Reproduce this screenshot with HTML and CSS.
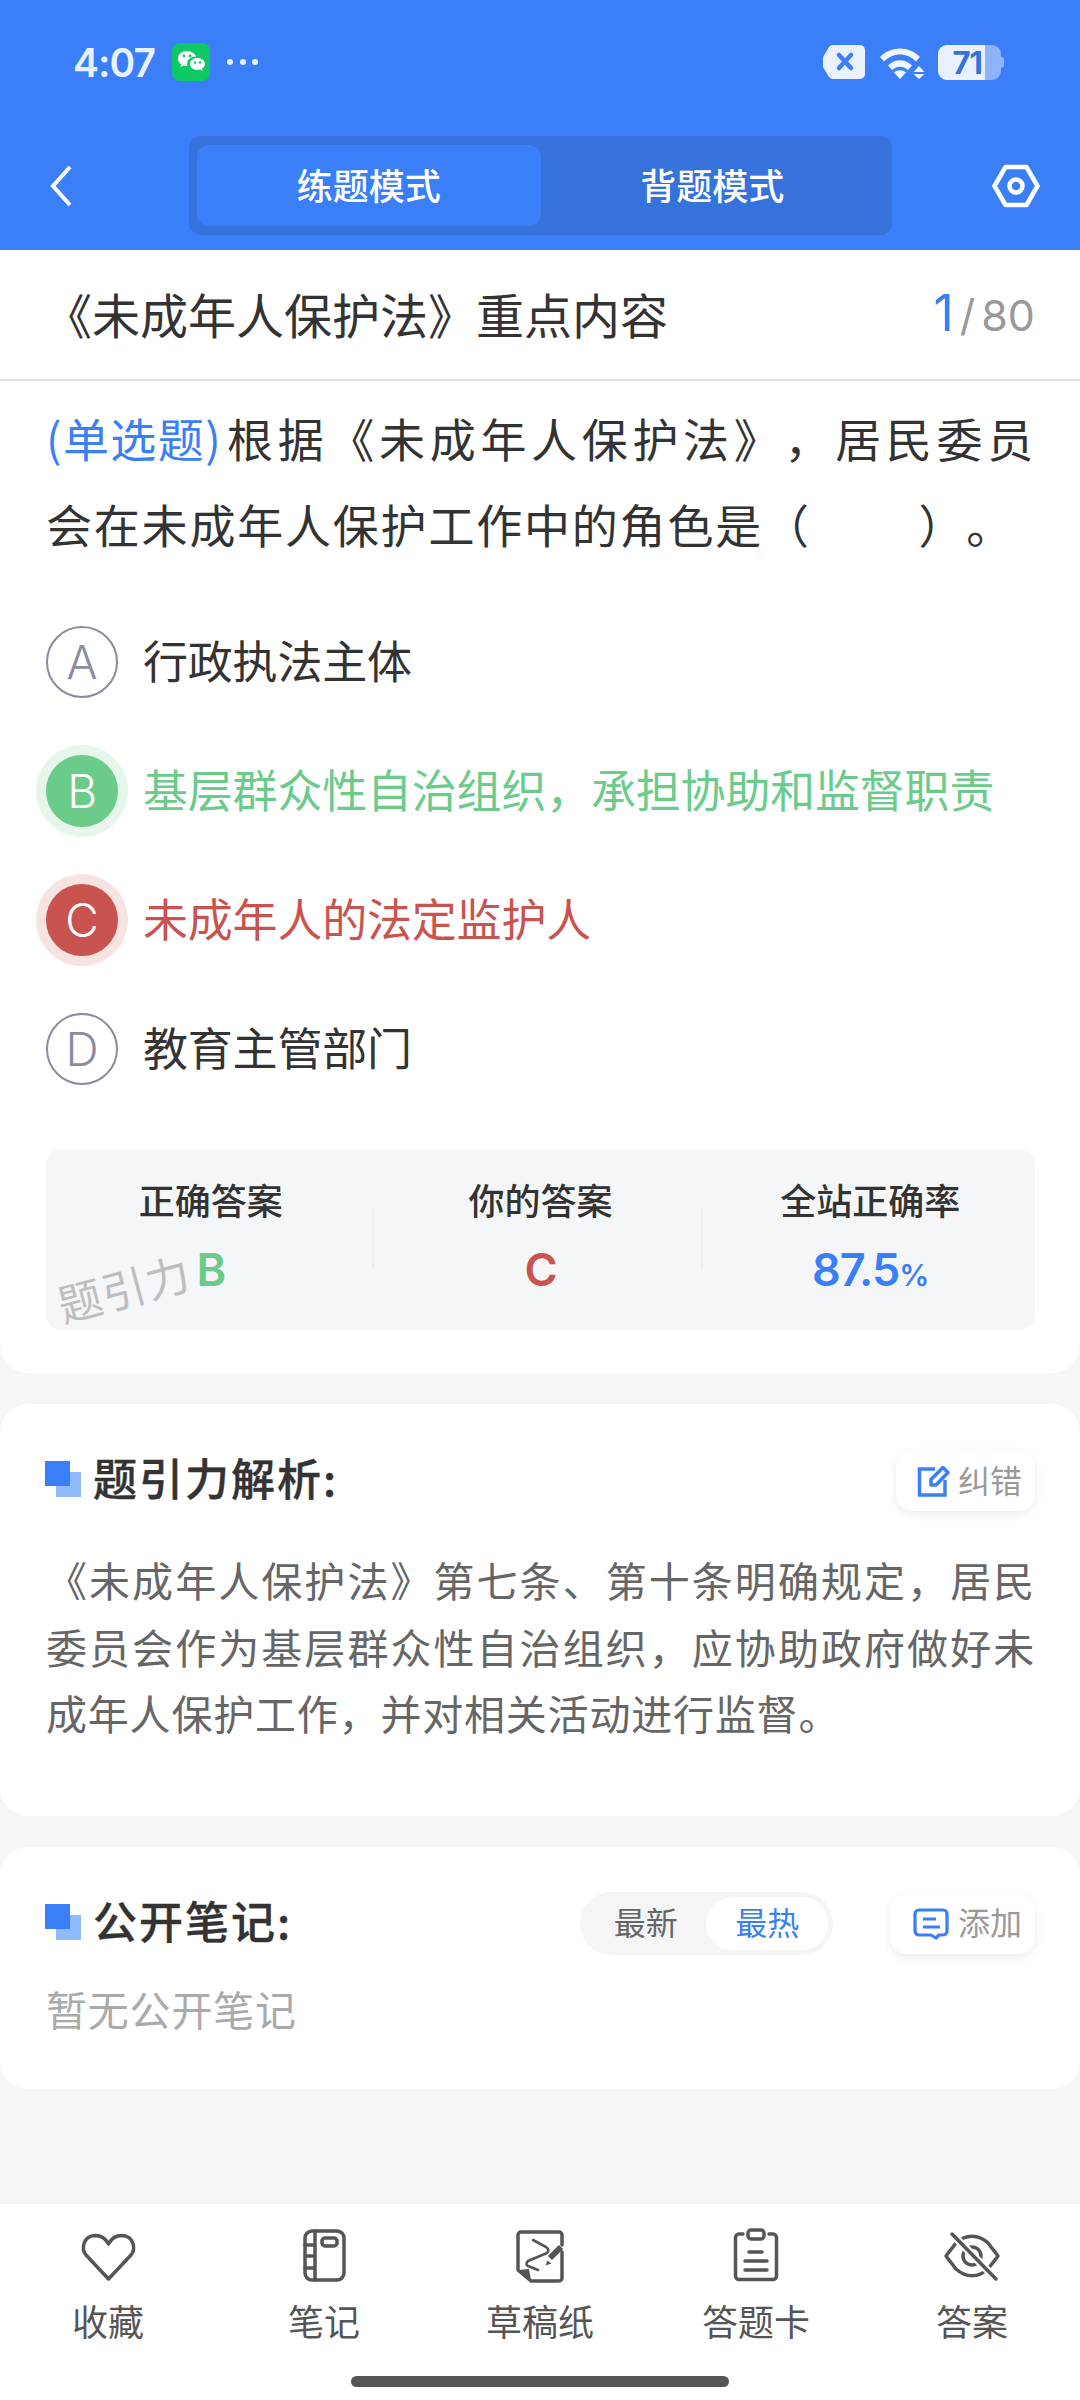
FILE: index.html
```html
<!DOCTYPE html>
<html lang="zh-CN">
<head>
<meta charset="utf-8">
<title>练题模式</title>
<link rel="stylesheet" href="styles.css">
</head>
<body>
<div class="app">
  <header class="header">
    <div class="status">
      <span class="time">4:07</span>
      <svg class="wechat" viewBox="0 0 38 38" width="38" height="38">
        <rect width="38" height="38" rx="8" fill="#0DC963"/>
        <path d="M15 8c-5 0-9 3.300-9 7.500 0 2.400 1.300 4.400 3.200 5.800l-.9 2.900 3.300-1.700c1.100.3 2.200.5 3.400.5h.6c-.3-.8-.4-1.500-.4-2.300 0-4 3.800-7.100 8.400-7.100h.5C23 10.500 19.400 8 15 8z" fill="#fff"/>
        <path d="M33 21c0-3.400-3.400-6-7.500-6S18 17.600 18 21s3.400 6 7.500 6c.9 0 1.800-.1 2.600-.4l2.600 1.400-.7-2.300C31.800 24.600 33 22.900 33 21z" fill="#fff"/>
        <circle cx="12" cy="13" r="1.400" fill="#0DC963"/><circle cx="18" cy="13" r="1.400" fill="#0DC963"/>
        <circle cx="23" cy="19.500" r="1.200" fill="#0DC963"/><circle cx="28" cy="19.500" r="1.200" fill="#0DC963"/>
      </svg>
      <span class="dots"><i></i><i></i><i></i></span>
      <span class="status-right">
        <svg viewBox="0 0 44 36" width="44" height="36">
          <path d="M11 1H38a5 5 0 0 1 5 5V30a5 5 0 0 1-5 5H11a5 5 0 0 1-4-2L1 23V13L7 3a5 5 0 0 1 4-2z" fill="#E9F0FF"/>
          <path d="M17 11l12 13M29 11L17 24" stroke="#3B7FF8" stroke-width="4.500" stroke-linecap="round" fill="none"/>
        </svg>
        <svg class="wifi" viewBox="0 0 48 34" width="48" height="34">
          <path d="M2 12C13 .5 31 .5 42 12l-4 4.500C29 7 15 7 6 16.500z" fill="#F2F6FF"/>
          <path d="M10 20.500c7-7 17-7 24 0l-4 4.500c-5-4.500-11-4.500-16 0z" fill="#F2F6FF"/>
          <path d="M16 27.500c3.500-3 8.500-3 12 0l-6 6.500z" fill="#F2F6FF"/>
          <path d="M41 21l5.500 6h-11zM35.500 29h11L41 34z" fill="#F2F6FF"/>
        </svg>
        <span class="battery"><span class="battery-fill">71</span></span>
      </span>
    </div>
    <nav class="nav">
      <svg class="back" viewBox="0 0 24 44" width="24" height="44"><path d="M21 3L4 22l17 19" fill="none" stroke="#fff" stroke-width="4"/></svg>
      <div class="tabs">
        <span class="tab tab-on">练题模式</span>
        <span class="tab">背题模式</span>
      </div>
      <svg class="gear" viewBox="0 0 48 44" width="48" height="44">
        <path d="M13.500 3h21L45.500 22l-11 19h-21L2.500 22z" fill="none" stroke="#fff" stroke-width="4.500" stroke-linejoin="round"/>
        <circle cx="24" cy="22" r="6.500" fill="none" stroke="#fff" stroke-width="4.500"/>
      </svg>
    </nav>
  </header>

  <main class="main">
    <section class="card card-question">
      <div class="title-row">
        <h1 class="title">《未成年人保护法》重点内容</h1>
        <span class="progress"><b>1</b><i>/</i>80</span>
      </div>
      <div class="question-body">
        <p class="question"><span class="qtype">(单选题)</span>根据《未成年人保护法》，居民委员会在未成年人保护工作中的角色是（　　&nbsp;）。</p>
        <ul class="options">
          <li class="option"><span class="letter">A</span><span class="option-text">行政执法主体</span></li>
          <li class="option option-right"><span class="letter">B</span><span class="option-text">基层群众性自治组织，承担协助和监督职责</span></li>
          <li class="option option-wrong"><span class="letter">C</span><span class="option-text">未成年人的法定监护人</span></li>
          <li class="option"><span class="letter">D</span><span class="option-text">教育主管部门</span></li>
        </ul>
        <div class="stats">
          <div class="stat"><span class="stat-label">正确答案</span><span class="stat-value green">B</span></div>
          <div class="stat"><span class="stat-label">你的答案</span><span class="stat-value red">C</span></div>
          <div class="stat"><span class="stat-label">全站正确率</span><span class="stat-value blue">87.5<small>%</small></span></div>
          <span class="watermark">题引力</span>
        </div>
      </div>
    </section>

    <section class="card card-analysis">
      <div class="section-head">
        <h2 class="section-title">题引力解析:</h2>
        <span class="chip">
          <svg viewBox="0 0 34 32" width="34" height="32">
            <path d="M18 4H2.500V30H28V15" fill="none" stroke="#3B7FF8" stroke-width="3.500"/>
            <path d="M14 14.500L26 2.500l5 5-12 12.500h-5z" fill="none" stroke="#3B7FF8" stroke-width="3.500" stroke-linejoin="round"/>
          </svg><span class="chip-text">纠错</span></span>
      </div>
      <p class="analysis">《未成年人保护法》第七条、第十条明确规定，居民委员会作为基层群众性自治组织，应协助政府做好未成年人保护工作，并对相关活动进行监督。</p>
    </section>

    <section class="card card-notes">
      <div class="section-head">
        <h2 class="section-title">公开笔记:</h2>
        <div class="head-tools">
          <div class="toggle"><span class="toggle-item">最新</span><span class="toggle-item toggle-on">最热</span></div>
          <span class="chip chip-wide">
            <svg viewBox="0 0 36 32" width="36" height="32">
              <path d="M6 2h24a4 4 0 0 1 4 4v17a4 4 0 0 1-4 4h-4l-3 3-5-3H6a4 4 0 0 1-4-4V6a4 4 0 0 1 4-4z" fill="none" stroke="#3B7FF8" stroke-width="3.200" stroke-linejoin="round"/>
              <path d="M10 11h13M10 19h17" stroke="#3B7FF8" stroke-width="3.200"/>
            </svg><span class="chip-text">添加</span></span>
        </div>
      </div>
      <p class="empty">暂无公开笔记</p>
    </section>
  </main>

  <footer class="toolbar">
    <div class="tools">
      <div class="tool">
        <svg viewBox="0 0 60 60" width="60" height="60"><path d="M30.500 54L8 30C3 24 5 11 17 10.500c6 0 11 3.500 13.500 8.500C33 14 38 10.500 44 10.500 56 11 58 24 53 30z" class="ico"/></svg>
        <span>收藏</span>
      </div>
      <div class="tool">
        <svg viewBox="0 0 60 60" width="60" height="60">
          <rect x="11" y="6" width="39" height="49" rx="7" class="ico"/>
          <path d="M21 6v49M11 20h10M11 31h10M11 43h10" class="ico"/>
          <rect x="28" y="13" width="15" height="8" rx="3" class="ico"/>
        </svg>
        <span>笔记</span>
      </div>
      <div class="tool">
        <svg viewBox="0 0 60 60" width="60" height="60">
          <path d="M52 20V10a3 3 0 0 0-3-3H11a3 3 0 0 0-3 3v35l13 11h28a3 3 0 0 0 3-3V27" class="ico"/>
          <path d="M9 45l10-1 2 11z" class="ico-fill"/>
          <path d="M23 15l13 7c3 2 3 4 1 6L18 36c-2 2-2 4 0 5l10 4" class="ico thin"/>
          <path d="M51 22L40 33" class="ico wide"/>
          <path d="M37.500 35.500l-2 5 6-2z" class="ico-fill"/>
        </svg>
        <span>草稿纸</span>
      </div>
      <div class="tool">
        <svg viewBox="0 0 60 60" width="60" height="60">
          <path d="M17 9h-4a3.500 3.500 0 0 0-3.500 3.500V51a3.500 3.500 0 0 0 3.500 3.500h34a3.500 3.500 0 0 0 3.500-3.500V12.500A3.500 3.500 0 0 0 47 9h-4" class="ico"/>
          <rect x="22" y="5" width="16" height="9" rx="3" class="ico"/>
          <path d="M23 27h13M19 36h22M19 45h22" class="ico"/>
        </svg>
        <span>答题卡</span>
      </div>
      <div class="tool">
        <svg viewBox="0 0 60 60" width="60" height="60">
          <path d="M4 31l10-13c10-9 22-9 32 0l10 13-10 13c-10 9-22 9-32 0z" class="ico"/>
          <circle cx="30" cy="31" r="9" class="ico"/>
          <path d="M10 9l44 45" class="knock"/>
          <path d="M10 9l44 45" class="ico"/>
        </svg>
        <span>答案</span>
      </div>
    </div>
    <div class="home-bar"></div>
  </footer>
</div>
</body>
</html>
```
FILE: styles.css
```css
* { box-sizing: border-box; margin: 0; padding: 0; }

html, body { width: 1080px; height: 2400px; overflow: hidden; }

body {
  background: #F5F6F8;
  color: #333;
  font-family: "Noto Sans CJK SC", "Noto Sans", sans-serif;
  text-spacing-trim: space-all;
}

.app { width: 1080px; height: 2400px; display: flex; flex-direction: column; }

/* Blue header: status bar and mode switch */
.header { height: 250px; background: #3B7FF8; flex: none; }

.status {
  height: 136px;
  padding: 0 79px 12px 73px;
  display: flex;
  align-items: center;
  color: #E9F0FF;
}

.time { font-family: Inter, sans-serif; font-size: 39px; font-weight: 600; letter-spacing: -1px; width: 99px; }

.wechat { flex: none; }

.dots { display: flex; gap: 6.5px; margin-left: 17px; }
.dots i { width: 6px; height: 6px; border-radius: 50%; background: #E9F0FF; }

.status-right { margin-left: auto; display: flex; align-items: center; gap: 12px; }

.battery {
  width: 63px;
  height: 35px;
  background: #8DB3FB;
  border-radius: 9px;
  display: block;
  position: relative;
}
.battery::after {
  content: "";
  position: absolute;
  right: -3px;
  top: 12px;
  width: 3px;
  height: 11px;
  background: #8DB3FB;
  border-radius: 0 3px 3px 0;
}
.battery-fill {
  display: block;
  width: 47px;
  height: 35px;
  background: #E9F0FF;
  border-radius: 9px 0 0 9px;
  color: #3670DC;
  font-family: Inter, sans-serif;
  font-size: 31px;
  font-weight: 700;
  line-height: 35px;
  text-align: right;
  padding-right: 3px;
  letter-spacing: -1px;
}

.nav {
  height: 99px;
  padding: 0 40px 0 49px;
  display: flex;
  align-items: center;
}
.back { flex: none; }
.gear { flex: none; margin-left: auto; }

.tabs {
  margin-left: 116px;
  width: 703px;
  height: 99px;
  padding: 9px 8px;
  background: #3672DC;
  border-radius: 12px;
  display: flex;
}
.tab {
  flex: 1;
  padding-bottom: 4px;
  color: #fff;
  font-size: 36px;
  font-weight: 500;
  display: flex;
  align-items: center;
  justify-content: center;
  border-radius: 12px;
}
.tab-on { background: #3B7FF8; }

/* Scrolling content */
.main { flex: 1; display: flex; flex-direction: column; gap: 31px; }

.card { background: #fff; border-radius: 28px; }
.card-question { border-radius: 0 0 28px 28px; padding-bottom: 43px; }

.title-row {
  height: 131px;
  padding: 0 45px 3px 44px;
  border-bottom: 2px solid #E4E4E4;
  display: flex;
  align-items: center;
  justify-content: space-between;
}
.title { font-size: 48px; font-weight: 400; color: #333; }
.progress { font-family: Inter, sans-serif; font-size: 43px; color: #999; display: flex; align-items: baseline; }
.progress b { font-size: 50px; font-weight: 400; color: #3B7FF8; }
.progress i { font-style: normal; margin: 0 6px 0 6px; }

.question-body { padding: 13px 45px 0 46px; }

.question {
  font-size: 46px;
  line-height: 86px;
  letter-spacing: 1.8px;
  text-align: justify;
  color: #333;
}
.qtype { display: inline-block; color: #3B7FF8; letter-spacing: 1.4px; margin-right: 2px; }

.options { list-style: none; margin-top: 31px; }
.option {
  height: 129px;
  display: flex;
  align-items: center;
  gap: 25px;
  font-size: 45px;
  letter-spacing: -.2px;
  color: #333;
}
.option-text { margin-bottom: 4px; }
.letter {
  flex: none;
  width: 72px;
  height: 72px;
  border: 2px solid #8A8C9E;
  border-radius: 50%;
  color: #8A8C9E;
  font-family: Inter, sans-serif;
  font-size: 46px;
  font-weight: 300;
  display: flex;
  align-items: center;
  justify-content: center;
}
.option-right { color: #6BCB8B; }
.option-right .letter { background: #6BCB8B; border-color: #6BCB8B; color: #fff; box-shadow: 0 0 0 10px #E6F6EB; }
.option-wrong { color: #C9534E; }
.option-wrong .letter { background: #C9534E; border-color: #C9534E; color: #fff; box-shadow: 0 0 0 10px #F6E3E2; }

.stats {
  position: relative;
  height: 181px;
  margin-top: 36px;
  background: #F5F6F8;
  border-radius: 16px;
  display: grid;
  grid-template-columns: repeat(3, 1fr);
}
.stat {
  position: relative;
  display: flex;
  flex-direction: column;
  align-items: center;
  padding-top: 23px;
}
.stat + .stat::before {
  content: "";
  position: absolute;
  left: -4px;
  top: 60px;
  height: 60px;
  width: 2px;
  background: #EDEEF0;
}
.stat-label { font-size: 36px; font-weight: 500; line-height: 54px; color: #333; }
.stat-value { font-family: Inter, sans-serif; font-size: 45px; font-weight: 600; letter-spacing: -1px; line-height: 64px; margin-top: 12px; }
.stat-value small { font-size: 30px; }
.green { color: #6BCB8B; }
.red { color: #C9534E; }
.blue { color: #3B7FF8; }

.watermark {
  position: absolute;
  left: 10px;
  top: 113px;
  font-size: 44px;
  letter-spacing: 1px;
  line-height: 50px;
  color: #BDBEC0;
  transform: rotate(-15deg);
}

/* Analysis and notes sections */
.card-analysis { padding: 47px 45px 66px 46px; height: 412px; }
.card-notes { padding: 45px 45px 49px 46px; height: 242px; }

.section-head {
  display: flex;
  align-items: center;
  justify-content: space-between;
  min-height: 60px;
}
.section-title {
  position: relative;
  padding: 0 0 8px 47px;
  font-size: 44px;
  font-weight: 500;
  -webkit-text-stroke: .4px #333;
  letter-spacing: 2px;
  line-height: 52px;
  color: #333;
}
.section-title::before {
  content: "";
  position: absolute;
  left: -1px;
  top: 10px;
  width: 25px;
  height: 25px;
  background: #3B7FF8;
  box-shadow: 11px 11px 0 0 #8FBBFD;
}

.chip {
  height: 60px;
  padding: 0 13px 0 21px;
  background: #fff;
  border-radius: 16px;
  box-shadow: 0 3px 10px rgba(0, 0, 0, .08);
  display: flex;
  align-items: center;
  gap: 7px;
  font-size: 32px;
  color: #999;
}
.chip-wide { padding-left: 23px; gap: 9px; }
.chip-text { margin-bottom: 5px; }

.analysis {
  margin-top: 35px;
  font-size: 41px;
  line-height: 66.5px;
  letter-spacing: .8px;
  text-align: justify;
  color: #666;
}

.head-tools { display: flex; align-items: center; gap: 57px; }

.toggle {
  width: 253px;
  height: 63px;
  padding: 5px;
  background: #F5F5F5;
  border-radius: 32px;
  display: flex;
  justify-content: space-between;
  font-size: 32px;
}
.toggle-item { width: 122px; padding-bottom: 5px; display: flex; align-items: center; justify-content: center; color: #666; }
.toggle-on { background: #fff; border-radius: 27px; color: #3B7FF8; }

.empty { margin-top: 23px; font-size: 41px; line-height: 60px; letter-spacing: .8px; color: #AAA; }

/* Bottom action bar */
.toolbar { flex: none; height: 196px; background: #fff; position: relative; }
.tools { display: grid; grid-template-columns: repeat(5, 216px); padding-top: 21px; }
.tool { display: flex; flex-direction: column; align-items: center; font-size: 36px; line-height: 52px; color: #555; }
.tool span { margin-top: 9px; }

.ico { fill: none; stroke: #555; stroke-width: 3.500; stroke-linejoin: round; stroke-linecap: round; }
.ico.thin { stroke-width: 2.600; }
.ico.wide { stroke-width: 6; stroke-linecap: butt; }
.ico-fill { fill: #555; }
.knock { fill: none; stroke: #fff; stroke-width: 8; }

.home-bar {
  position: absolute;
  left: 351px;
  bottom: 13px;
  width: 378px;
  height: 11px;
  background: #555;
  border-radius: 6px;
}
```
